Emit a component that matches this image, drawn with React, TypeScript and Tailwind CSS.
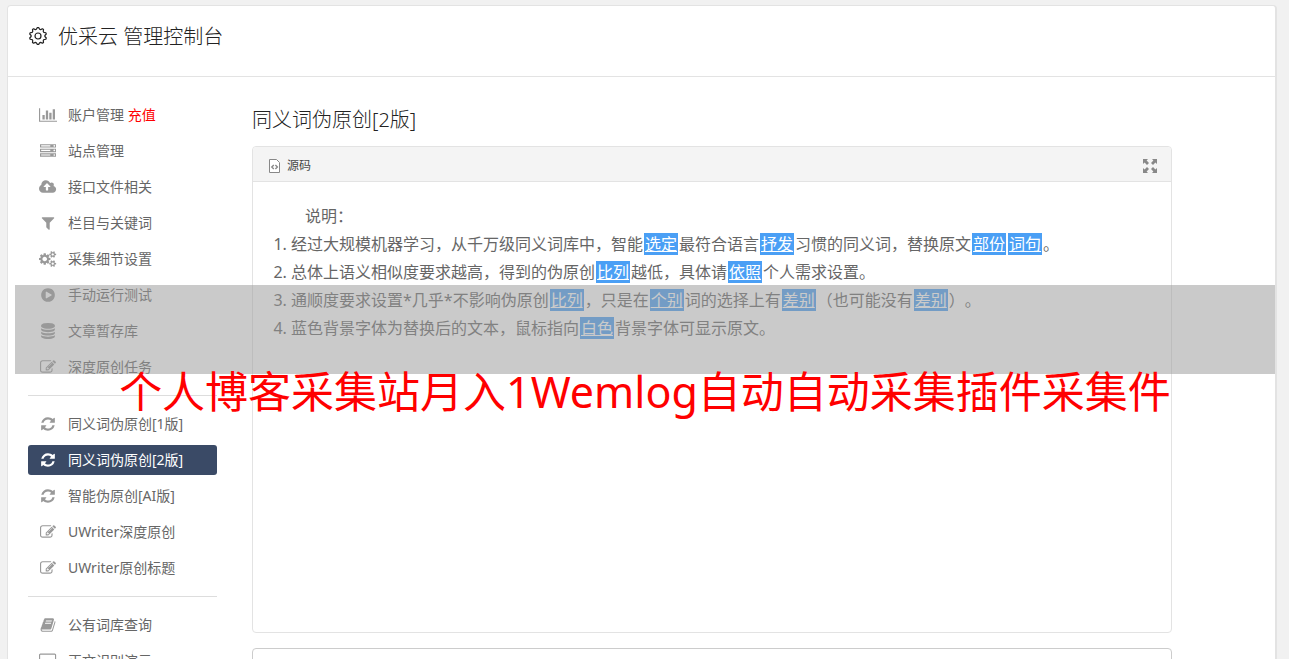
import type { ReactNode } from 'react';
import { cva } from 'class-variance-authority';
import clsx from 'clsx';

// Icon outlines, drawn on a 1792 unit high grid
const ICONS = {
  chart: {
    width: 2048,
    path: 'M640 896v512h-256v-512h256zm384-512v1024h-256v-1024h256zm1024 1152v128h-2048v-1536h128v1408h1920zm-640-896v768h-256v-768h256zm384-384v1152h-256v-1152h256z',
  },
  server: {
    width: 1792,
    path: 'M128 1408h1024v-128h-1024v128zm0-512h1024v-128h-1024v128zm1568 448q0-40-28-68t-68-28-68 28-28 68 28 68 68 28 68-28 28-68zm-1568-960h1024v-128h-1024v128zm1568 448q0-40-28-68t-68-28-68 28-28 68 28 68 68 28 68-28 28-68zm0-512q0-40-28-68t-68-28-68 28-28 68 28 68 68 28 68-28 28-68zm96 832v384h-1792v-384h1792zm0-512v384h-1792v-384h1792zm0-512v384h-1792v-384h1792z',
  },
  upload: {
    width: 1920,
    path: 'M1280 864q0-14-9-23l-352-352q-9-9-23-9t-23 9l-351 351q-10 12-10 24 0 14 9 23t23 9h224v352q0 13 9.5 22.5t22.5 9.5h192q13 0 22.5-9.5t9.5-22.5v-352h224q13 0 22.5-9.5t9.5-22.5zm640 288q0 159-112.5 271.5t-271.5 112.5h-1088q-185 0-316.5-131.5t-131.5-316.5q0-130 70-240t188-165q-2-30-2-43 0-212 150-362t362-150q156 0 285.5 87t188.5 231q71-62 166-62 106 0 181 75t75 181q0 76-41 138 130 31 213.5 135.5t83.5 238.5z',
  },
  filter: {
    width: 1792,
    path: 'M1595 295q17 41-14 70l-493 493v742q0 42-39 59-13 5-25 5-27 0-45-19l-256-256q-19-19-19-45v-486l-493-493q-31-29-14-70 17-39 59-39h1280q42 0 59 39z',
  },
  cogs: {
    width: 1920,
    path: 'M896 896q0-106-75-181t-181-75-181 75-75 181 75 181 181 75 181-75 75-181zm768 512q0-52-38-90t-90-38-90 38-38 90q0 53 37.5 90.5t90.5 37.5 90.5-37.5 37.5-90.5zm0-1024q0-52-38-90t-90-38-90 38-38 90q0 53 37.5 90.5t90.5 37.5 90.5-37.5 37.5-90.5zm-384 421v185q0 10-7 19.5t-16 10.5l-155 24q-11 35-32 76 34 48 90 115 7 11 7 20 0 12-7 19-23 30-82.5 89.5t-78.5 59.5q-11 0-21-7l-115-90q-37 19-77 31-11 108-23 155-7 24-30 24h-186q-11 0-20-7.5t-10-17.5l-23-153q-34-10-75-31l-118 89q-7 7-20 7-11 0-21-8-144-133-144-160 0-9 7-19 10-14 41-53t47-61q-23-44-35-82l-152-24q-10-1-17-9.5t-7-19.5v-185q0-10 7-19.5t16-10.5l155-24q11-35 32-76-34-48-90-115-7-11-7-20 0-12 7-20 22-30 82-89t79-59q11 0 21 7l115 90q34-18 77-32 11-108 23-154 7-24 30-24h186q11 0 20 7.5t10 17.5l23 153q34 10 75 31l118-89q8-7 20-7 11 0 21 8 144 133 144 160 0 8-7 19-12 16-42 54t-45 60q23 48 34 82l152 23q10 2 17 10.5t7 19.5zm640 533v140q0 16-149 31-12 27-30 52 51 113 51 138 0 4-4 7-122 71-124 71-8 0-46-47t-52-68q-20 2-30 2t-30-2q-14 21-52 68t-46 47q-2 0-124-71-4-3-4-7 0-25 51-138-18-25-30-52-149-15-149-31v-140q0-16 149-31 13-29 30-52-51-113-51-138 0-4 4-7 4-2 35-20t59-34 30-16q8 0 46 46.5t52 67.5q20-2 30-2t30 2q51-71 92-112l6-2q4 0 124 70 4 3 4 7 0 25-51 138 17 23 30 52 149 15 149 31zm0-1024v140q0 16-149 31-12 27-30 52 51 113 51 138 0 4-4 7-122 71-124 71-8 0-46-47t-52-68q-20 2-30 2t-30-2q-14 21-52 68t-46 47q-2 0-124-71-4-3-4-7 0-25 51-138-18-25-30-52-149-15-149-31v-140q0-16 149-31 13-29 30-52-51-113-51-138 0-4 4-7 4-2 35-20t59-34 30-16q8 0 46 46.5t52 67.5q20-2 30-2t30 2q51-71 92-112l6-2q4 0 124 70 4 3 4 7 0 25-51 138 17 23 30 52 149 15 149 31z',
  },
  play: {
    width: 1792,
    path: 'M896 128q209 0 385.5 103t279.5 279.5 103 385.5-103 385.5-279.5 279.5-385.5 103-385.5-103-279.5-279.5-103-385.5 103-385.5 279.5-279.5 385.5-103zm384 823q32-18 32-55t-32-55l-544-320q-31-19-64-1-32 19-32 56v640q0 37 32 56 16 8 32 8 17 0 32-9z',
  },
  database: {
    width: 1792,
    path: 'M896 768q237 0 443-43t325-127v170q0 69-103 128t-280 93.5-385 34.5-385-34.5-280-93.5-103-128v-170q119 84 325 127t443 43zm0 768q237 0 443-43t325-127v170q0 69-103 128t-280 93.5-385 34.5-385-34.5-280-93.5-103-128v-170q119 84 325 127t443 43zm0-384q237 0 443-43t325-127v170q0 69-103 128t-280 93.5-385 34.5-385-34.5-280-93.5-103-128v-170q119 84 325 127t443 43zm0-1152q208 0 385 34.5t280 93.5 103 128v128q0 69-103 128t-280 93.5-385 34.5-385-34.5-280-93.5-103-128v-128q0-69 103-128t280-93.5 385-34.5z',
  },
  edit: {
    width: 1792,
    path: 'M888 1184l116-116-152-152-116 116v56h96v96h56zm440-720q-16-16-33 1l-350 350q-17 17-1 33t33-1l350-350q17-17 1-33zm80 594v190q0 119-84.5 203.5t-203.5 84.5h-832q-119 0-203.5-84.5t-84.5-203.5v-832q0-119 84.5-203.5t203.5-84.5h832q63 0 117 25 15 7 18 23 3 17-9 29l-49 49q-14 14-32 8-23-6-45-6h-832q-66 0-113 47t-47 113v832q0 66 47 113t113 47h832q66 0 113-47t47-113v-126q0-13 9-22l64-64q15-15 35-7t20 29zm-96-738l288 288-672 672h-288v-288zm444 132l-92 92-288-288 92-92q28-28 68-28t68 28l152 152q28 28 28 68t-28 68z',
  },
  refresh: {
    width: 1792,
    path: 'M1639 1056q0 5-1 7-64 268-268 434.5t-478 166.5q-146 0-282.5-55t-243.5-157l-129 129q-19 19-45 19t-45-19-19-45v-448q0-26 19-45t45-19h448q26 0 45 19t19 45-19 45l-137 137q71 66 161 102t187 36q134 0 250-65t186-179q11-17 53-117 8-23 30-23h192q13 0 22.5 9.5t9.5 22.5zm25-800v448q0 26-19 45t-45 19h-448q-26 0-45-19t-19-45 19-45l138-138q-148-137-349-137-134 0-250 65t-186 179q-11 17-53 117-8 23-30 23h-199q-13 0-22.5-9.5t-9.5-22.5v-7q65-268 270-434.5t480-166.5q146 0 284 55.5t245 156.5l130-129q19-19 45-19t45 19 19 45z',
  },
  book: {
    width: 1792,
    path: 'M1703 478q40 57 18 129l-275 906q-19 64-76.5 107.5t-122.5 43.5h-923q-77 0-148.5-53.5t-99.5-131.5q-24-67-2-127 0-4 3-27t4-37q1-8-3-21.5t-3-19.5q2-11 8-21t16.5-23.5 16.5-23.5q23-38 45-91.5t30-91.5q3-10 .5-30t-.5-28q3-11 17-28t17-23q21-36 42-92t25-90q1-9-2.5-32t.5-28q4-13 22-30.5t22-22.5q19-26 42.5-84.5t27.5-96.5q1-8-3-25.5t-2-26.5q2-8 9-18t18-23 17-21q8-12 16.5-30.5t15-35 16-36 19.5-32 26.5-23.5 36-11.5 47.5 5.5l-1 3q38-9 51-9h761q74 0 114 56t18 130l-274 906q-36 119-71.5 153.5t-128.5 34.5h-869q-27 0-38 15-11 16-1 43 24 70 144 70h923q29 0 56-15.5t35-41.5l300-987q7-22 5-57 38 15 59 43zm-1064 2q-4 13 2 22.5t20 9.5h608q13 0 25.5-9.5t16.5-22.5l21-64q4-13-2-22.5t-20-9.5h-608q-13 0-25.5 9.5t-16.5 22.5zm-83 256q-4 13 2 22.5t20 9.5h608q13 0 25.5-9.5t16.5-22.5l21-64q4-13-2-22.5t-20-9.5h-608q-13 0-25.5 9.5t-16.5 22.5z',
  },
  screen: {
    width: 1920,
    path: 'M1792 1056v-832q0-32-32-32h-1600q-32 0-32 32v832q0 32 32 32h1600q32 0 32-32zm128-832v1088q0 66-47 113t-113 47h-544q0 80 64 192h-640q64-112 64-192h-544q-66 0-113-47t-47-113v-1088q0-66 47-113t113-47h1600q66 0 113 47t47 113z',
  },
};

type IconName = keyof typeof ICONS;

interface MenuItem {
  icon: IconName;
  label: string;
  note?: string;
  active?: boolean;
}

const MENU: MenuItem[][] = [
  [
    { icon: 'chart', label: '账户管理', note: '充值' },
    { icon: 'server', label: '站点管理' },
    { icon: 'upload', label: '接口文件相关' },
    { icon: 'filter', label: '栏目与关键词' },
    { icon: 'cogs', label: '采集细节设置' },
    { icon: 'play', label: '手动运行测试' },
    { icon: 'database', label: '文章暂存库' },
    { icon: 'edit', label: '深度原创任务' },
  ],
  [
    { icon: 'refresh', label: '同义词伪原创[1版]' },
    { icon: 'refresh', label: '同义词伪原创[2版]', active: true },
    { icon: 'refresh', label: '智能伪原创[AI版]' },
    { icon: 'edit', label: 'UWriter深度原创' },
    { icon: 'edit', label: 'UWriter原创标题' },
  ],
  [
    { icon: 'book', label: '公有词库查询' },
    { icon: 'screen', label: '正文识别演示' },
  ],
];

function Icon({ name }: { name: IconName }) {
  const { width, path } = ICONS[name];
  return (
    <svg viewBox={`0 0 ${width} 1792`} className="h-4 w-auto" fill="currentColor" aria-hidden="true">
      <path d={path} />
    </svg>
  );
}

// Ten-toothed gear: each tooth is two points on the outer circle and two on the inner one
const GEAR_TEETH = 10;
const gearPoints = Array.from({ length: GEAR_TEETH * 4 }, (_, i) => {
  const radius = i % 4 < 2 ? 8.5 : 6.9;
  const angle = ((i - 0.5) / (GEAR_TEETH * 4)) * Math.PI * 2 - Math.PI / 2;
  return `${(10 + radius * Math.cos(angle)).toFixed(2)},${(10 + radius * Math.sin(angle)).toFixed(2)}`;
}).join(' ');

function GearIcon() {
  return (
    <svg viewBox="0 0 20 20" className="size-5" fill="none" stroke="currentColor" strokeWidth="1.2" aria-hidden="true">
      <polygon strokeLinejoin="round" points={gearPoints} />
      <circle cx="10" cy="10" r="3" />
    </svg>
  );
}

function SourceIcon() {
  return (
    <svg viewBox="0 0 11 14" className="h-[14px] w-[11px]" fill="none" stroke="#888" aria-hidden="true">
      <path fill="#fff" d="M.5.5h7l3 3v10H.5z" />
      <path strokeWidth="1.4" d="M4.8 6 2.8 8l2 2M6.4 6l2 2-2 2" />
    </svg>
  );
}

function MaximizeIcon() {
  const arrow = 'M0 0h5L3.6 1.6 6 4 4 6 1.6 3.6 0 5z';
  return (
    <svg viewBox="0 0 14 14" className="size-[14px]" fill="#888" aria-hidden="true">
      <path d={arrow} />
      <path d={arrow} transform="matrix(-1 0 0 1 14 0)" />
      <path d={arrow} transform="matrix(1 0 0 -1 0 14)" />
      <path d={arrow} transform="matrix(-1 0 0 -1 14 14)" />
    </svg>
  );
}

const menuLink = cva('flex h-[30px] items-center gap-[10px] rounded-[3px] px-[10px] text-sm', {
  variants: {
    active: {
      true: 'bg-[#3a4a66] text-white',
      false: 'text-[#666]',
    },
  },
});

function Sidebar() {
  return (
    <nav className="w-[189px] shrink-0 divide-y divide-[#ddd]">
      {MENU.map((group, i) => (
        <ul key={i} className={clsx('flex flex-col gap-[6px] pb-[13px]', i > 0 && 'pt-[13px]')}>
          {group.map((item) => (
            <li key={item.label}>
              <a href="#" className={menuLink({ active: !!item.active })}>
                <span className={clsx('flex w-5 shrink-0 justify-center', !item.active && 'text-[#999]')}>
                  <Icon name={item.icon} />
                </span>
                <span className="whitespace-nowrap">
                  {item.label}
                  {item.note && <span className="text-[#f00]"> {item.note}</span>}
                </span>
              </a>
            </li>
          ))}
        </ul>
      ))}
    </nav>
  );
}

function Word({ children }: { children: ReactNode }) {
  return <span className="mx-px bg-[#4a9ff5] px-px text-white underline">{children}</span>;
}

function Editor() {
  return (
    <section className="rounded-[4px] border border-[#e3e3e3]">
      <div className="flex h-[35px] items-center justify-between rounded-t-[4px] border-b border-[#e3e3e3] bg-[#f4f4f4] pt-[3px] pr-[14px] pl-4">
        <button type="button" className="flex items-center gap-[7px] text-xs text-[#484848]">
          <SourceIcon />
          源码
        </button>
        <button type="button" aria-label="最大化">
          <MaximizeIcon />
        </button>
      </div>
      <div className="min-h-[450px] p-5 text-base leading-7 text-[#666] [text-spacing-trim:space-all]">
        <p className="indent-8">说明：</p>
        <ol className="list-decimal pl-[18px]">
          <li>
            经过大规模机器学习，从千万级同义词库中，智能<Word>选定</Word>最符合语言<Word>抒发</Word>
            习惯的同义词，替换原文<Word>部份</Word><Word>词句</Word>。
          </li>
          <li>
            总体上语义相似度要求越高，得到的伪原创<Word>比列</Word>越低，具体请<Word>依照</Word>个人需求设置。
          </li>
          <li>
            通顺度要求设置*几乎*不影响伪原创<Word>比列</Word>，只是在<Word>个别</Word>词的选择上有<Word>差别</Word>
            （也可能没有<Word>差别</Word>）。
          </li>
          <li>
            蓝色背景字体为替换后的文本，鼠标指向<Word>白色</Word>背景字体可显示原文。
          </li>
        </ol>
      </div>
    </section>
  );
}

export default function App() {
  return (
    <div className="relative h-screen overflow-hidden bg-[#f1f1f1] pt-[5px] pr-3 pl-[7px] font-['Noto_Sans','Noto_Sans_CJK_SC',sans-serif]">
      <div className="min-h-full rounded-t-[4px] border border-r-2 border-[#e3e3e3] bg-white">
        <header className="flex h-[71px] items-start gap-[10px] border-b border-[#e3e3e3] px-5 pt-4 text-[#222]">
          <span className="flex h-7 items-center">
            <GearIcon />
          </span>
          <h1 className="text-xl leading-[30px] font-light">优采云 管理控制台</h1>
        </header>
        <div className="flex gap-[35px] px-5 pt-[23px]">
          <Sidebar />
          <main className="max-w-[920px] min-w-0 flex-1">
            <h2 className="mb-[11px] pt-[5px] text-xl leading-[30px] font-light text-[#222]">同义词伪原创[2版]</h2>
            <Editor />
            <textarea
              aria-label="原文"
              className="mt-[15px] block h-40 w-full resize-none rounded-[4px] border border-[#ccc] p-3"
            />
          </main>
        </div>
      </div>
      <div className="pointer-events-none absolute top-[285px] right-[14px] left-[15px]">
        <div className="h-[89px] bg-[#999]/52" />
        <p className="absolute inset-x-0 top-[77px] text-center text-[43px] leading-[60px] whitespace-nowrap text-[#f00]">
          个人博客采集站月入1Wemlog自动自动采集插件采集件
        </p>
      </div>
    </div>
  );
}
